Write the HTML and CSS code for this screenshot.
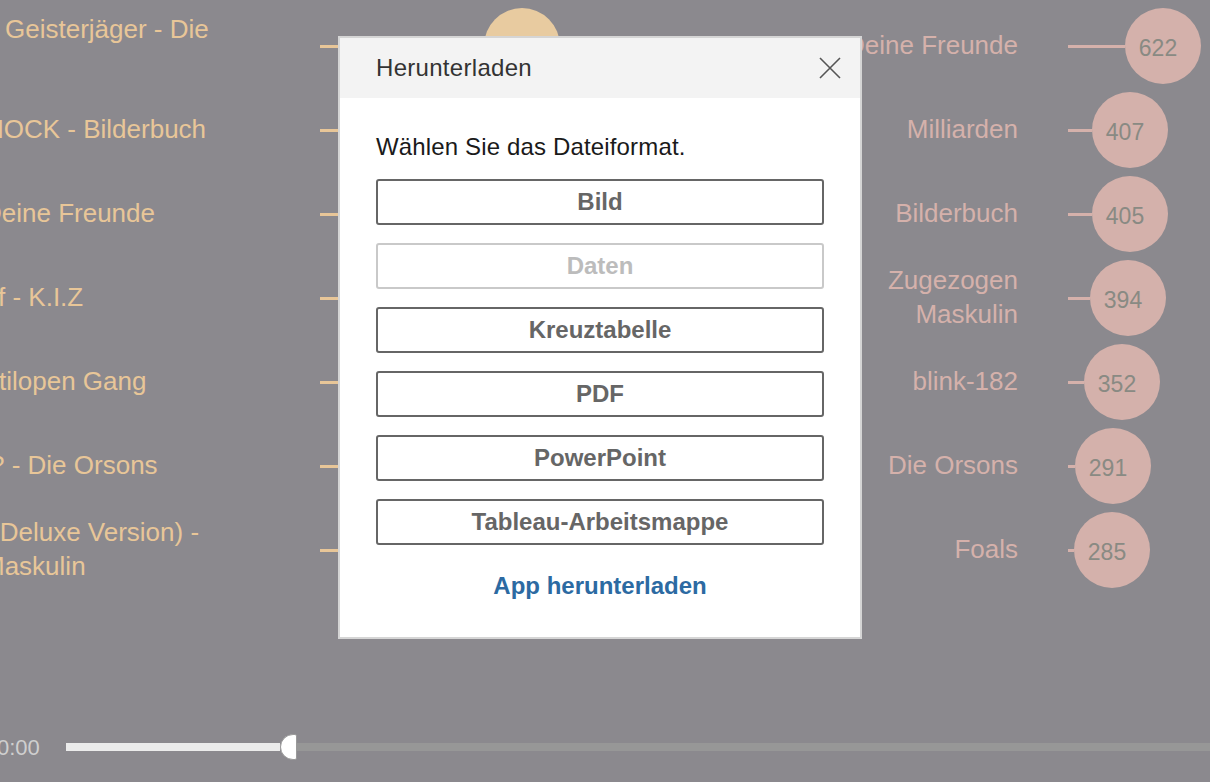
FILE: index.html
```html
<!DOCTYPE html>
<html lang="de">
<head>
<meta charset="utf-8">
<title>Herunterladen</title>
<link rel="stylesheet" href="styles.css">
</head>
<body>
<div class="page">
  <div class="chart">
    <div class="row">
      <div class="lab-left first"><span class="off-r1">Geisterjäger - Die</span><span class="off-r1">&nbsp;</span></div>
      <div class="mid"><div class="line-l to-dot"></div><div class="dot-l"></div></div>
      <div class="lab-right">Deine Freunde</div>
      <div class="val"><div class="line-r" style="width:57px"></div><div class="dot-r">622</div></div>
    </div>
    <div class="row">
      <div class="lab-left"><span class="off-r2">HOCK - Bilderbuch</span></div>
      <div class="mid"><div class="line-l"></div></div>
      <div class="lab-right">Milliarden</div>
      <div class="val"><div class="line-r" style="width:24px"></div><div class="dot-r">407</div></div>
    </div>
    <div class="row">
      <div class="lab-left"><span class="off-r3">Deine Freunde</span></div>
      <div class="mid"><div class="line-l"></div></div>
      <div class="lab-right">Bilderbuch</div>
      <div class="val"><div class="line-r" style="width:24px"></div><div class="dot-r">405</div></div>
    </div>
    <div class="row">
      <div class="lab-left"><span class="off-r4">f - K.I.Z</span></div>
      <div class="mid"><div class="line-l"></div></div>
      <div class="lab-right"><span>Zugezogen</span><span>Maskulin</span></div>
      <div class="val"><div class="line-r" style="width:22px"></div><div class="dot-r">394</div></div>
    </div>
    <div class="row">
      <div class="lab-left"><span class="off-r5">tilopen Gang</span></div>
      <div class="mid"><div class="line-l"></div></div>
      <div class="lab-right">blink-182</div>
      <div class="val"><div class="line-r" style="width:16px"></div><div class="dot-r">352</div></div>
    </div>
    <div class="row">
      <div class="lab-left"><span class="off-r6">? - Die Orsons</span></div>
      <div class="mid"><div class="line-l"></div></div>
      <div class="lab-right">Die Orsons</div>
      <div class="val"><div class="line-r" style="width:7px"></div><div class="dot-r">291</div></div>
    </div>
    <div class="row">
      <div class="lab-left"><span class="off-r7a">(Deluxe Version) -</span><span class="off-r7b">Maskulin</span></div>
      <div class="mid"><div class="line-l"></div></div>
      <div class="lab-right">Foals</div>
      <div class="val"><div class="line-r" style="width:6px"></div><div class="dot-r">285</div></div>
    </div>
  </div>

  <div class="slider">
    <span class="time">0:00</span>
    <div class="track">
      <div class="fill"></div>
      <div class="thumb"></div>
      <div class="rest"></div>
    </div>
  </div>

  <div class="dialog">
    <div class="dlg-head">
      <span class="dlg-title">Herunterladen</span>
      <svg class="close" width="22" height="22" viewBox="0 0 22 22" aria-hidden="true">
        <path d="M1 1 L21 21 M21 1 L1 21" stroke="#555" stroke-width="1.6" fill="none"/>
      </svg>
    </div>
    <div class="dlg-body">
      <p class="prompt">Wählen Sie das Dateiformat.</p>
      <button class="opt">Bild</button>
      <button class="opt disabled">Daten</button>
      <button class="opt">Kreuztabelle</button>
      <button class="opt">PDF</button>
      <button class="opt">PowerPoint</button>
      <button class="opt">Tableau-Arbeitsmappe</button>
      <a class="app-link">App herunterladen</a>
    </div>
  </div>
</div>
</body>
</html>
```

FILE: styles.css
```css
* { box-sizing: border-box; }

html, body {
  margin: 0;
  padding: 0;
}

body {
  width: 1210px;
  height: 782px;
  overflow: hidden;
  background: #8b898e;
  font-family: "Liberation Sans", Arial, sans-serif;
}

.page {
  position: relative;
  width: 1210px;
  height: 782px;
  display: flex;
  flex-direction: column;
}

/* ---------- chart ---------- */
.chart {
  padding-top: 4px;
  display: flex;
  flex-direction: column;
}

.row {
  height: 84px;
  display: grid;
  grid-template-columns: 320px 498px 200px 50px 1fr;
  align-items: center;
  font-size: 26px;
  line-height: 34px;
}

.lab-left {
  display: flex;
  flex-direction: column;
  white-space: nowrap;
  color: #e8c698;
  padding-bottom: 2px;
}
.lab-left.first { padding-bottom: 0; }
.lab-left span { display: block; }

.off-r1 { margin-left: 5px; }
.off-r2 { margin-left: -15px; }
.off-r3 { margin-left: -17px; }
.off-r4 { margin-left: -2px; }
.off-r5 { margin-left: -1px; }
.off-r6 { margin-left: -10px; }
.off-r7a { margin-left: -9px; }
.off-r7b { margin-left: -17px; }

.mid {
  display: flex;
  align-items: center;
}

.line-l {
  width: 120px;
  height: 3px;
  background: #e8c698;
}
.line-l.to-dot { width: 164px; }

.dot-l {
  width: 76px;
  height: 76px;
  border-radius: 50%;
  background: #e8cba0;
}

.lab-right {
  grid-column: 3;
  display: flex;
  flex-direction: column;
  align-items: flex-end;
  text-align: right;
  white-space: nowrap;
  color: #d5b1ab;
  padding-bottom: 2px;
}

.val {
  grid-column: 5;
  display: flex;
  align-items: center;
}

.line-r {
  height: 3px;
  background: #d5b1ab;
}

.dot-r {
  width: 76px;
  height: 76px;
  border-radius: 50%;
  background: #d4b1ab;
  color: #898a83;
  font-size: 23px;
  display: flex;
  align-items: center;
  justify-content: center;
  padding-right: 10px;
  padding-top: 4px;
}

/* ---------- slider ---------- */
.slider {
  margin-top: 142px;
  height: 26px;
  display: flex;
  align-items: center;
}

.time {
  margin-left: -3px;
  width: 69px;
  color: #cfcfcf;
  font-size: 22px;
  line-height: 26px;
  padding-top: 2px;
}

.track {
  flex: 1;
  display: flex;
  align-items: center;
}

.fill {
  width: 214px;
  height: 8px;
  background: #ebebeb;
}

.thumb {
  width: 17px;
  height: 26px;
  background: #fff;
  border: 1px solid #9a9a9a;
  border-radius: 13px 2px 2px 13px / 13px 2px 2px 13px;
}

.rest {
  flex: 1;
  height: 8px;
  background: #979797;
}

/* ---------- dialog ---------- */
.dialog {
  position: absolute;
  left: 338px;
  top: 36px;
  width: 524px;
  background: #fff;
  border: 2px solid #d5d5d5;
}

.dlg-head {
  height: 60px;
  background: #f3f3f3;
  display: flex;
  align-items: center;
  justify-content: space-between;
  padding: 0 19px 0 36px;
}

.dlg-title {
  font-size: 24px;
  color: #333;
  letter-spacing: 0.3px;
}

.close { display: block; }

.dlg-body {
  padding: 35px 36px 37px;
  display: flex;
  flex-direction: column;
  gap: 18px;
}

.prompt {
  margin: 0;
  font-size: 24px;
  line-height: 28px;
  color: #1a1a1a;
  letter-spacing: 0.15px;
}

.opt {
  height: 46px;
  width: 100%;
  margin: 0;
  padding: 0;
  background: #fff;
  border: 2px solid #666;
  border-radius: 3px;
  font-family: "Liberation Sans", Arial, sans-serif;
  font-weight: bold;
  font-size: 24px;
  color: #666;
}

.opt.disabled {
  border-color: #c9c9c9;
  color: #bcbcbc;
}

.app-link {
  margin-top: 9px;
  text-align: center;
  font-size: 24px;
  line-height: 28px;
  font-weight: bold;
  color: #2c6aa2;
}
```
